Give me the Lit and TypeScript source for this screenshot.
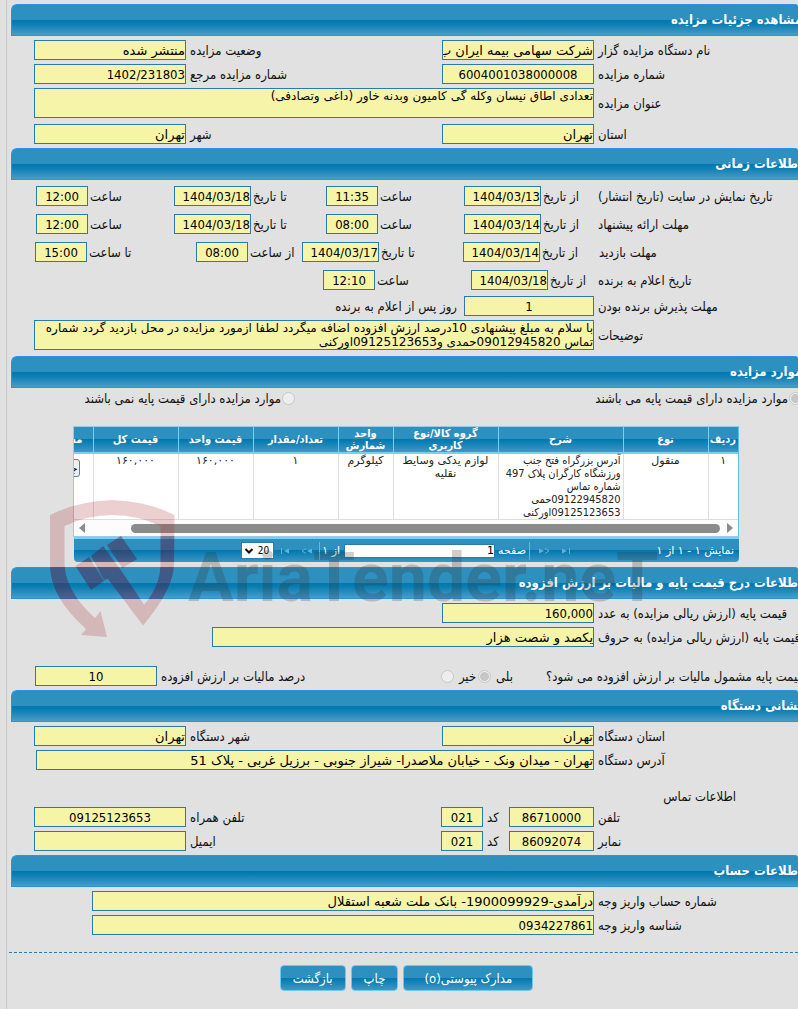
import { LitElement, html, css, svg } from "lit";
import { customElement } from "lit/decorators.js";

type Row = { id: string; label: string; value: string; align?: string };

@customElement("app-root")
export class AppRoot extends LitElement {
  static styles = css`
    :host {
      display: block;
      direction: rtl;
      background: #e1e1e1;
      color: #111;
      font-family: "DejaVu Sans Condensed", "DejaVu Sans", sans-serif;
      font-size: 13px;
      line-height: 13px;
      min-height: 100vh;
      overflow: hidden;
    }
    * { box-sizing: border-box; }
    .page {
      position: relative;
      min-height: 100vh;
      margin-left: 6px;
      padding: 4px 0 18px 4px;
      border-left: 1px solid #c8c8c8;
      overflow: hidden;
    }
    h2 {
      display: flex;
      align-items: center;
      height: 32px;
      margin: 0;
      border: 1px solid #2b92e4;
      border-right: 0;
      border-radius: 6px 3px 0 0;
      color: #fff;
      font-size: 13px;
      line-height: 16px;
      white-space: nowrap;
      background: linear-gradient(#2e90bf 0 50%, #0078b0 50%, #0a7db2 62%, #4a9cc6);
    }
    h2 span { margin-inline-start: -4px; }
    .body { display: grid; gap: 4px; padding: 4px 0 4px 23px; }
    .body.dates { padding-top: 6px; padding-bottom: 6px; }
    .row { display: grid; align-items: center; grid-template-columns: 204px 152px 1fr 152px; }
    .row.wide { grid-template-columns: 204px 1fr; }
    .row.part { grid-template-columns: 204px 382px; }
    .row.account { grid-template-columns: 204px 1fr; padding-left: 58px; }
    .row.address { padding-left: 2px; }
    .row.phone { grid-template-columns: 204px 85px 26px 42px 1fr 152px; }
    .row.title { margin-bottom: 2px; }
    .row.date { padding: 0 0 4px 2px; grid-template-columns: 200px 134fr 138fr 152fr 138fr; }
    .row.visit { padding-left: 1px; grid-template-columns: 199px 136fr 161fr 106fr 161fr; }
    .row.winner { padding-bottom: 2px; grid-template-columns: 200px 127fr 148fr 287fr; }
    .row.accept { grid-template-columns: 204px 130px 1fr; }
    .row.tax { padding: 15px 0 0 1px; grid-template-columns: 252px auto 1fr 122px; }
    label, .text {
      display: flex;
      justify-content: flex-end;
      padding: 0 0 0 4px;
      white-space: nowrap;
    }
    .text.flush { padding-left: 0; }
    .after { padding-right: 7px; }
    .pair { display: flex; align-items: center; justify-content: flex-end; }
    .pair label { padding-left: 2px; }
    .pair input { flex: none; }
    input, textarea {
      display: block;
      margin: 0;
      padding: 0;
      font-family: inherit;
      color: #000;
    }
    .field {
      width: 100%;
      height: 20px;
      border: 1px solid #2a7aab;
      border-radius: 0;
      background: #f6f4a6;
      font-size: 13px;
      line-height: 16px;
      outline: 0;
    }
    .field.words { font-family: "DejaVu Sans", sans-serif; }
    textarea.field {
      height: 30px;
      font-family: "DejaVu Sans", sans-serif;
      font-size: 12px;
      line-height: 14px;
      resize: none;
      overflow: hidden;
    }
    .center { text-align: center; }
    .d { width: 77px; }
    .t { width: 52px; text-align: center; }
    .radio {
      flex: none;
      appearance: none;
      width: 13px;
      height: 13px;
      border: 1px solid #c8c8c8;
      border-radius: 50%;
      background: #eee;
    }
    .radio:checked { background: radial-gradient(circle, #c6c6c6 0 4px, #eee 5px); }
    .radios { display: flex; padding: 4px 0 21px; }
    .choice { display: flex; align-items: center; gap: 1px; padding: 0; }
    .choice.first { margin-inline-start: -4px; width: 507px; justify-content: flex-start; }
    .options { display: flex; gap: 2px; padding-inline-start: 33px; }
    .options .choice { gap: 5px; }
    .grid { margin: 0 59px 5px 62px; font-family: "DejaVu Sans", sans-serif; font-size: 11px; }
    .scroller { border: 1px solid #9cc8e6; border-right-color: #5fbfe8; background: #fff; overflow: hidden; }
    table { width: 770px; border-collapse: collapse; table-layout: fixed; }
    th {
      height: 26px;
      padding: 0 2px;
      border-left: 1px solid #77d1f4;
      border-bottom: 2px solid #77d1f4;
      color: #fff;
      font-family: "DejaVu Sans Condensed", "DejaVu Sans", sans-serif;
      font-size: 11px;
      line-height: 12px;
      background: linear-gradient(#2e90bf 0 50%, #0078b0 50%, #3f97c4);
      overflow: hidden;
    }
    th:last-child { padding-right: 10px; text-align: right; }
    td {
      height: 65px;
      padding: 0 2px;
      border-left: 1px solid #ddd;
      border-bottom: 1px solid #ddd;
      line-height: 13px;
      text-align: center;
      vertical-align: top;
      color: #222;
    }
    td.desc { text-align: right; font-family: "DejaVu Sans Condensed", "DejaVu Sans", sans-serif; }
    td button {
      display: block;
      margin: 5px 11px 0 0;
      width: 91px;
      height: 18px;
      padding: 0 1px;
      border: 1px solid #777;
      border-radius: 3px;
      background: #efefef;
      color: #000;
      font: inherit;
      text-align: right;
    }
    .bar {
      display: flex;
      direction: ltr;
      align-items: center;
      height: 16px;
      padding: 0 5px;
      background: #fcfcfc;
    }
    .bar svg { display: block; flex: none; }
    .thumb { flex: 1; height: 9px; margin: 0 7px 0 46px; border-radius: 5px; background: #8b8b8b; }
    .pager {
      display: flex;
      align-items: center;
      height: 25px;
      margin-left: 1px;
      padding: 0 5px;
      border-top: 2px solid #77d1f4;
      border-radius: 0 0 4px 4px;
      color: #fff;
      background: linear-gradient(#2e90bf 0 50%, #0078b0 50%, #3f97c4);
    }
    .count { width: 163px; white-space: nowrap; }
    .nav { display: flex; gap: 10px; }
    .nav button { display: block; padding: 0; border: 0; background: none; width: 11px; height: 10px; }
    .nav svg { display: block; }
    .sep { width: 1px; height: 18px; margin: 0 9px 0 3px; background: #6fb4d6; }
    .sep.end { margin: 0 2px 0 7px; }
    .pager label { padding: 0 0 0 3px; }
    .pageno { width: 151px; height: 14px; border: 1px solid #2a7aab; background: #fff; font-size: 11px; }
    .total { margin-right: 4px; }
    select {
      display: block;
      width: 33px;
      height: 17px;
      margin: 0;
      padding: 0 4px 0 0;
      border: 1px solid #2a7aab;
      border-radius: 0;
      appearance: none;
      color: #000;
      font: 10px "DejaVu Sans Condensed", "DejaVu Sans", sans-serif;
      background: #fff;
    }
    .size { position: relative; margin-right: 6px; }
    .size svg { position: absolute; left: 4px; top: 6px; }
    .contact { display: flex; padding: 16px 62px 0 0; }
    hr { border: 0; border-top: 1px dashed #2a7aab; margin: 13px 0 12px -2px; }
    .actions { display: flex; justify-content: center; gap: 5px; padding-left: 4px; }
    .actions button {
      height: 26px;
      padding: 0 12px;
      border: 1px solid #6cc9f0;
      border-radius: 4px;
      color: #fff;
      font-family: inherit;
      font-size: 13px;
      background: linear-gradient(#2e90bf 0 50%, #0078b0 50%, #3f97c4);
    }
    .actions .docs { min-width: 130px; }
    .mark { position: absolute; left: 41px; top: 495px; width: 620px; height: 146px; pointer-events: none; }
  `;

  private input(id: string, value: string, cls = "") {
    const words = /[\u0600-\u06ff]/.test(value) ? "words" : "";
    return html`<input class="field ${words} ${cls}" id=${id} type="text" readonly .value=${value}>`;
  }

  private item(r: Row) {
    return html`<label for=${r.id}>${r.label}</label>${this.input(r.id, r.value, r.align ?? "")}`;
  }

  private row(items: Row[], cls = "") {
    return html`<div class="row ${cls}">${items.map((r) => this.item(r))}</div>`;
  }

  private dateRow(id: string, title: string, pairs: [string, string][], cls = "") {
    return html`<div class="row date ${cls}">
      <span class="text flush">${title}</span>
      ${pairs.map(([l, v], i) => html`<div class="pair">
        <label for="${id}${i}">${l}</label>${this.input(`${id}${i}`, v, v.includes("/") ? "d" : "t")}
      </div>`)}
    </div>`;
  }

  private arrow(flip: boolean, bar: boolean) {
    return html`<svg width="11" height="10" viewBox="0 0 11 10">
      <g fill="#66b0d3" stroke="#66b0d3" transform=${flip ? "matrix(-1 0 0 1 11 0)" : "translate(0 0)"}>
        ${bar
          ? svg`<path d="M2 2.5v5L7 5z" stroke="none"/><path d="M9.5 2v6" fill="none"/>`
          : svg`<path d="M0 2.5v5L5 5z" stroke="none"/><path d="M6 2.5L10 5 6 7.5" fill="none"/>`}
      </g></svg>`;
  }

  render() {
    const widths = [30, 85, 125, 105, 55, 85, 75, 85, 125];
    const heads = ["ردیف", "نوع", "شرح", "گروه کالا/نوع کاربری", "واحد شمارش", "تعداد/مقدار", "قیمت واحد", "قیمت کل", "مشاهده جزئیات"];
    const shield = "M50 515Q78 501 112 500Q147 501 174.5 515L174 565Q173 590 143 625.5L108 579L104 580L91 556L103 546L121.5 571L144 604.5Q160 587 160.5 565V526Q137 515 112 515Q88 515 64.5 526V565Q66 592 95 618L100.5 611L107 637L81 635L86 629Q50 597 50 565Z";
    const bars = "M75.5 566L89 557L104 581L91 590ZM107 545L121 536L137 559L122.5 568Z";
    return html`<main class="page">
      <section>
        <h2><span>مشاهده جزئیات مزایده</span></h2>
        <div class="body">
          ${this.row([
            { id: "org", label: "نام دستگاه مزایده گزار", value: "شرکت سهامی بیمه ایران ب" },
            { id: "status", label: "وضعیت مزایده", value: "منتشر شده" },
          ])}
          ${this.row([
            { id: "number", label: "شماره مزایده", value: "6004001038000008", align: "center" },
            { id: "ref", label: "شماره مزایده مرجع", value: "1402/231803" },
          ])}
          <div class="row wide title">
            <label for="title">عنوان مزایده</label>
            <textarea class="field" id="title" readonly .value=${"تعدادی اطاق نیسان وکله گی کامیون وبدنه خاور (داغی وتصادفی)"}></textarea>
          </div>
          ${this.row([
            { id: "province", label: "استان", value: "تهران" },
            { id: "city", label: "شهر", value: "تهران" },
          ])}
        </div>
      </section>

      <section>
        <h2><span>اطلاعات زمانی</span></h2>
        <div class="body dates">
          ${this.dateRow("show", "تاریخ نمایش در سایت (تاریخ انتشار)", [["از تاریخ", "1404/03/13"], ["ساعت", "11:35"], ["تا تاریخ", "1404/03/18"], ["ساعت", "12:00"]])}
          ${this.dateRow("offer", "مهلت ارائه پیشنهاد", [["از تاریخ", "1404/03/14"], ["ساعت", "08:00"], ["تا تاریخ", "1404/03/18"], ["ساعت", "12:00"]])}
          ${this.dateRow("visit", "مهلت بازدید", [["از تاریخ", "1404/03/14"], ["تا تاریخ", "1404/03/17"], ["از ساعت", "08:00"], ["تا ساعت", "15:00"]], "visit")}
          ${this.dateRow("winner", "تاریخ اعلام به برنده", [["از تاریخ", "1404/03/18"], ["ساعت", "12:10"]], "winner")}
          <div class="row accept">
            ${this.item({ id: "accept", label: "مهلت پذیرش برنده بودن", value: "1", align: "center" })}
            <span class="after">روز پس از اعلام به برنده</span>
          </div>
          <div class="row wide">
            <label for="notes">توضیحات</label>
            <textarea class="field" id="notes" readonly .value=${"با سلام به مبلغ پیشنهادی 10درصد ارزش افزوده اضافه میگردد لطفا ازمورد مزایده در محل بازدید گردد شماره تماس 09012945820حمدی و09125123653اورکنی"}></textarea>
          </div>
        </div>
      </section>

      <section>
        <h2><span>موارد مزایده</span></h2>
        <div class="radios">
          <label class="choice first"><input class="radio" type="radio" name="base" disabled checked>موارد مزایده دارای قیمت پایه می باشند</label>
          <label class="choice"><input class="radio" type="radio" name="base" disabled>موارد مزایده دارای قیمت پایه نمی باشند</label>
        </div>
        <div class="grid">
          <div class="scroller">
            <table>
              <colgroup>${widths.map((w) => html`<col style="width:${w}px">`)}</colgroup>
              <thead><tr>${heads.map((h) => html`<th scope="col">${h}</th>`)}</tr></thead>
              <tbody><tr>
                <td>۱</td><td>منقول</td>
                <td class="desc">آدرس بزرگراه فتح جنب ورزشگاه کارگران پلاک 497 شماره تماس 09122945820حمی 09125123653اورکنی</td>
                <td>لوازم یدکی وسایط نقلیه</td><td>کیلوگرم</td><td>۱</td>
                <td>۱۶۰,۰۰۰</td><td>۱۶۰,۰۰۰</td><td><button type="button">جزئیات</button></td>
              </tr></tbody>
            </table>
            <div class="bar">
              <svg width="6" height="10"><path d="M6 0v10L0 5z" fill="#8b8b8b"/></svg>
              <div class="thumb"></div>
              <svg width="6" height="10"><path d="M0 0v10L6 5z" fill="#8b8b8b"/></svg>
            </div>
          </div>
          <div class="pager">
            <span class="count">نمایش ۱ - ۱ از ۱</span>
            <div class="nav">
              <button type="button" aria-label="صفحه اول">${this.arrow(false, true)}</button>
              <button type="button" aria-label="صفحه قبل">${this.arrow(false, false)}</button>
            </div>
            <span class="sep"></span>
            <label for="page">صفحه</label>
            <input class="pageno" id="page" type="text" .value=${"1"}>
            <span class="total">از ۱</span>
            <span class="sep end"></span>
            <div class="nav">
              <button type="button" aria-label="صفحه بعد">${this.arrow(true, false)}</button>
              <button type="button" aria-label="صفحه آخر">${this.arrow(true, true)}</button>
            </div>
            <span class="size">
              <select aria-label="تعداد در صفحه"><option>20</option></select>
              <svg width="8" height="6"><path d="M0.5 1L4 4.5 7.5 1" fill="none" stroke="#111" stroke-width="2"/></svg>
            </span>
          </div>
        </div>
      </section>

      <section>
        <h2><span>اطلاعات درج قیمت پایه و مالیات بر ارزش افزوده</span></h2>
        <div class="body">
          ${this.row([{ id: "price", label: "قیمت پایه (ارزش ریالی مزایده) به عدد", value: "160,000" }])}
          ${this.row([{ id: "words", label: "قیمت پایه (ارزش ریالی مزایده) به حروف", value: "یکصد و شصت هزار" }], "part")}
          <div class="row tax">
            <span class="text flush">قیمت پایه مشمول مالیات بر ارزش افزوده می شود؟</span>
            <div class="options">
              <label class="choice">بلی<input class="radio" type="radio" name="vat" disabled checked></label>
              <label class="choice">خیر<input class="radio" type="radio" name="vat" disabled></label>
            </div>
            ${this.item({ id: "vat", label: "درصد مالیات بر ارزش افزوده", value: "10", align: "center" })}
          </div>
        </div>
      </section>

      <section>
        <h2><span>نشانی دستگاه</span></h2>
        <div class="body">
          ${this.row([
            { id: "oprovince", label: "استان دستگاه", value: "تهران" },
            { id: "ocity", label: "شهر دستگاه", value: "تهران" },
          ])}
          ${this.row([{ id: "address", label: "آدرس دستگاه", value: "تهران - میدان ونک - خیابان ملاصدرا- شیراز جنوبی - برزیل غربی - پلاک 51" }], "wide address")}
          <div class="contact">اطلاعات تماس</div>
          ${this.row([
            { id: "tel", label: "تلفن", value: "86710000", align: "center" },
            { id: "telcode", label: "کد", value: "021", align: "center" },
            { id: "mobile", label: "تلفن همراه", value: "09125123653", align: "center" },
          ], "phone")}
          ${this.row([
            { id: "fax", label: "نمابر", value: "86092074", align: "center" },
            { id: "faxcode", label: "کد", value: "021", align: "center" },
            { id: "email", label: "ایمیل", value: "" },
          ], "phone")}
        </div>
      </section>

      <section>
        <h2><span>اطلاعات حساب</span></h2>
        <div class="body">
          ${this.row([{ id: "account", label: "شماره حساب واریز وجه", value: "درآمدی-1900099929- بانک ملت شعبه استقلال" }], "account")}
          ${this.row([{ id: "payid", label: "شناسه واریز وجه", value: "0934227861" }], "account")}
        </div>
      </section>

      <hr>
      <div class="actions">
        <button class="docs" type="button">مدارک پیوستی(o)</button>
        <button type="button">چاپ</button>
        <button type="button">بازگشت</button>
      </div>

      <svg class="mark" viewBox="48 495 620 146" direction="ltr" aria-hidden="true">
        <clipPath id="blue"><path d="M74 536H200V562H74ZM48 567H200V599H48Z"/></clipPath>
        <path d="${shield}${bars}" fill="#a9292d" fill-opacity=".22"/>
        <path d="${shield}${bars}" fill="#2a1450" fill-opacity=".3" clip-path="url(#blue)"/>
        <text x="188" y="601" font-family="Roboto, sans-serif" font-weight="bold" font-size="68" fill="#333" fill-opacity=".24">AriaTender.neT</text>
      </svg>
    </main>`;
  }
}
